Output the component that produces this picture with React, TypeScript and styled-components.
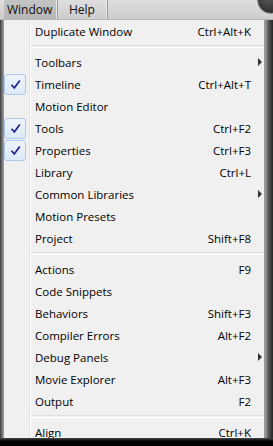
import React from 'react';
import styled, { createGlobalStyle } from 'styled-components';

const GlobalStyle = createGlobalStyle`
  html, body {
    margin: 0;
    padding: 0;
    background: #000;
  }
  body {
    font-family: 'Open Sans', 'Noto Sans', 'DejaVu Sans', sans-serif;
  }
`;

type Entry =
  | { kind: 'sep' }
  | { kind: 'item'; label: string; shortcut?: string; checked?: boolean; sub?: boolean };

const entries: Entry[] = [
  { kind: 'item', label: 'Duplicate Window', shortcut: 'Ctrl+Alt+K' },
  { kind: 'sep' },
  { kind: 'item', label: 'Toolbars', sub: true },
  { kind: 'item', label: 'Timeline', shortcut: 'Ctrl+Alt+T', checked: true },
  { kind: 'item', label: 'Motion Editor' },
  { kind: 'item', label: 'Tools', shortcut: 'Ctrl+F2', checked: true },
  { kind: 'item', label: 'Properties', shortcut: 'Ctrl+F3', checked: true },
  { kind: 'item', label: 'Library', shortcut: 'Ctrl+L' },
  { kind: 'item', label: 'Common Libraries', sub: true },
  { kind: 'item', label: 'Motion Presets' },
  { kind: 'item', label: 'Project', shortcut: 'Shift+F8' },
  { kind: 'sep' },
  { kind: 'item', label: 'Actions', shortcut: 'F9' },
  { kind: 'item', label: 'Code Snippets' },
  { kind: 'item', label: 'Behaviors', shortcut: 'Shift+F3' },
  { kind: 'item', label: 'Compiler Errors', shortcut: 'Alt+F2' },
  { kind: 'item', label: 'Debug Panels', sub: true },
  { kind: 'item', label: 'Movie Explorer', shortcut: 'Alt+F3' },
  { kind: 'item', label: 'Output', shortcut: 'F2' },
  { kind: 'sep' },
  { kind: 'item', label: 'Align', shortcut: 'Ctrl+K' },
];

const Screen = styled.div`
  position: relative;
  width: 273px;
  height: 446px;
  overflow: hidden;
  display: flex;
  flex-direction: column;
  background: #000;
`;

const MenuBar = styled.div`
  height: 19px;
  flex: none;
  display: flex;
  align-items: stretch;
  padding-left: 4px;
  background: linear-gradient(#dedede, #cdcdcd);
  border-bottom: 1px solid #b4b4b4;
`;

const BarItem = styled.div<{ $active?: boolean }>`
  display: flex;
  align-items: center;
  padding: ${(p) => (p.$active ? '0 0 0 3px' : '0 0 0 11px')};
  width: ${(p) => (p.$active ? '54px' : '50px')};
  box-sizing: border-box;
  font-size: 12px;
  color: #111;
  background: ${(p) => (p.$active ? 'linear-gradient(#c4c4c4, #b6b6b6)' : 'transparent')};
  border-right: 1px solid #9c9c9c;
  box-shadow: inset -1px 0 0 #e8e8e8;
`;

const FrameCorner = styled.div`
  position: absolute;
  top: -14px;
  right: -12px;
  width: 26px;
  height: 26px;
  border-radius: 50%;
  background: radial-gradient(circle at 40% 40%, #5a5a5a, #1e1e1e);
  border: 1px solid #888;
`;

const Body = styled.div`
  flex: none;
  height: 418px;
  display: flex;
  overflow: hidden;
`;

const LeftShade = styled.div`
  width: 3px;
  flex: none;
  background: linear-gradient(to right, #3c3c3c, #8c8c8c);
`;

const RightShade = styled.div`
  width: 8px;
  flex: none;
  background: linear-gradient(to right, #a6a6a6, #5c5c5c 40%, #262626);
`;

const BottomShade = styled.div`
  flex: 1;
  background: linear-gradient(#4a4a4a, #000 3px);
`;

const Menu = styled.div`
  flex: 1;
  border: 1px solid #979797;
  border-top: none;
  border-bottom: none;
  background-color: #f0f0f0;
  background-image: linear-gradient(
    to right,
    transparent 25px,
    #e2e3e3 25px,
    #e2e3e3 26px,
    #ffffff 26px,
    #ffffff 27px,
    transparent 27px
  );
`;

const Item = styled.div`
  height: 22px;
  display: flex;
  align-items: center;
  font-size: 11.5px;
  color: #000;
  white-space: nowrap;
`;

const CheckSlot = styled.div<{ $on?: boolean }>`
  width: 22px;
  height: 21px;
  flex: none;
  box-sizing: border-box;
  display: flex;
  align-items: center;
  justify-content: center;
  border-radius: 3px;
  border: 1px solid ${(p) => (p.$on ? '#a9c9ef' : 'transparent')};
  background: ${(p) => (p.$on ? 'linear-gradient(#eef4fc, #dde9f8)' : 'transparent')};
`;

const Label = styled.span`
  flex: 1;
  margin-left: 9px;
`;

const Shortcut = styled.span`
  text-align: right;
`;

const ArrowSlot = styled.div`
  width: 13px;
  flex: none;
  display: flex;
  align-items: center;
  padding-left: 7px;
  box-sizing: border-box;
`;

const Arrow = styled.div`
  width: 0;
  height: 0;
  border-top: 4px solid transparent;
  border-bottom: 4px solid transparent;
  border-left: 4px solid #333;
`;

const Separator = styled.div`
  height: 9px;
  display: flex;
  align-items: center;
  padding-left: 27px;

  &::after {
    content: '';
    flex: 1;
    height: 1px;
    border-top: 1px solid #e0e0e0;
    border-bottom: 1px solid #ffffff;
  }
`;

const CheckMark = () => (
  <svg width="11" height="11" viewBox="0 0 11 11">
    <path d="M1.5 5.8 L4.3 9 L9.8 1.5" fill="none" stroke="#1c1c8a" strokeWidth="1.7" />
  </svg>
);

function App() {
  return (
    <Screen>
      <GlobalStyle />
      <MenuBar>
        <BarItem $active>Window</BarItem>
        <BarItem>Help</BarItem>
      </MenuBar>
      <FrameCorner />
      <Body>
        <LeftShade />
        <Menu>
          {entries.map((e, i) =>
            e.kind === 'sep' ? (
              <Separator key={i} />
            ) : (
              <Item key={i}>
                <CheckSlot $on={e.checked}>{e.checked && <CheckMark />}</CheckSlot>
                <Label>{e.label}</Label>
                <Shortcut>{e.shortcut}</Shortcut>
                <ArrowSlot>{e.sub && <Arrow />}</ArrowSlot>
              </Item>
            )
          )}
        </Menu>
        <RightShade />
      </Body>
      <BottomShade />
    </Screen>
  );
}

export default App;
